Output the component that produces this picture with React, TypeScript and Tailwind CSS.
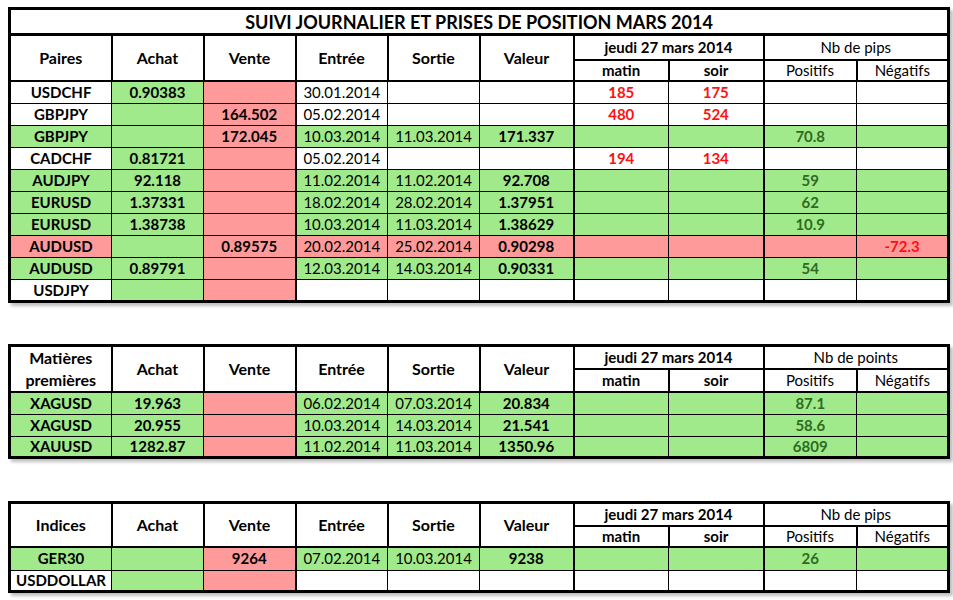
import React from "react";

type Fill = "w" | "g" | "r";
type Cell = { v?: string; f: Fill; tone?: "red" | "green" | "plain"; bold?: boolean };

const fillClass: Record<Fill, string> = {
  w: "bg-white",
  g: "bg-[#a0ea8c]",
  r: "bg-[#ff9a9a]",
};

// widths of the ten columns, left to right
const COLS = [102, 92, 92, 92, 92, 94, 95, 95, 93, 92];

// Column index after which a heavier vertical rule is drawn in data rows
const HEAVY = new Set([2, 5, 7]);

function row(
  pair: string,
  pairFill: Fill,
  achat: [string, Fill],
  vente: [string, Fill],
  rest: Fill,
  entree = "",
  sortie = "",
  valeur = "",
  matin = "",
  soir = "",
  pos = "",
  neg = ""
): Cell[] {
  return [
    { v: pair, f: pairFill, bold: true },
    { v: achat[0], f: achat[1], bold: true },
    { v: vente[0], f: vente[1], bold: true },
    { v: entree, f: rest },
    { v: sortie, f: rest },
    { v: valeur, f: rest, bold: true },
    { v: matin, f: rest, bold: true, tone: "red" },
    { v: soir, f: rest, bold: true, tone: "red" },
    { v: pos, f: rest, bold: true, tone: "green" },
    { v: neg, f: rest, bold: true, tone: "red" },
  ];
}

const pairs: Cell[][] = [
  row("USDCHF", "w", ["0.90383", "g"], ["", "r"], "w", "30.01.2014", "", "", "185", "175"),
  row("GBPJPY", "w", ["", "g"], ["164.502", "r"], "w", "05.02.2014", "", "", "480", "524"),
  row("GBPJPY", "g", ["", "g"], ["172.045", "r"], "g", "10.03.2014", "11.03.2014", "171.337", "", "", "70.8"),
  row("CADCHF", "w", ["0.81721", "g"], ["", "r"], "w", "05.02.2014", "", "", "194", "134"),
  row("AUDJPY", "g", ["92.118", "g"], ["", "r"], "g", "11.02.2014", "11.02.2014", "92.708", "", "", "59"),
  row("EURUSD", "g", ["1.37331", "g"], ["", "r"], "g", "18.02.2014", "28.02.2014", "1.37951", "", "", "62"),
  row("EURUSD", "g", ["1.38738", "g"], ["", "r"], "g", "10.03.2014", "11.03.2014", "1.38629", "", "", "10.9"),
  row("AUDUSD", "r", ["", "g"], ["0.89575", "r"], "r", "20.02.2014", "25.02.2014", "0.90298", "", "", "", "-72.3"),
  row("AUDUSD", "g", ["0.89791", "g"], ["", "r"], "g", "12.03.2014", "14.03.2014", "0.90331", "", "", "54"),
  row("USDJPY", "w", ["", "g"], ["", "r"], "w"),
];

const commodities: Cell[][] = [
  row("XAGUSD", "g", ["19.963", "g"], ["", "r"], "g", "06.02.2014", "07.03.2014", "20.834", "", "", "87.1"),
  row("XAGUSD", "g", ["20.955", "g"], ["", "r"], "g", "10.03.2014", "14.03.2014", "21.541", "", "", "58.6"),
  row("XAUUSD", "g", ["1282.87", "g"], ["", "r"], "g", "11.02.2014", "11.03.2014", "1350.96", "", "", "6809"),
];

const indices: Cell[][] = [
  row("GER30", "g", ["", "g"], ["9264", "r"], "g", "07.02.2014", "10.03.2014", "9238", "", "", "26"),
  row("USDDOLLAR", "w", ["", "g"], ["", "r"], "w"),
];

function toneClass(c: Cell) {
  if (c.tone === "red") return "text-[#ff1010]";
  if (c.tone === "green") return "text-[#2f6b1f]";
  return "text-black";
}

function SheetTable({
  title,
  first,
  unit,
  rows,
  rowHeights,
  headTop,
  headBottom,
}: {
  title?: string;
  first: React.ReactNode;
  unit: string;
  rows: Cell[][];
  rowHeights: number[];
  headTop: string;
  headBottom: string;
}) {
  const head = "border-2 border-black bg-white text-center leading-none";
  const main = `${head} font-bold text-[16px]`;
  return (
    <table className="table-fixed border-collapse border-[3px] border-black w-[939px] shadow-[3px_3px_3px_rgba(0,0,0,0.25)]">
      <colgroup>
        {COLS.map((w, i) => (
          <col key={i} style={{ width: w }} />
        ))}
      </colgroup>
      <tbody>
        {title && (
          <tr>
            <td colSpan={10} className="h-[26px] border-b-[3px] border-black bg-white text-center text-[18px] font-bold leading-none">
              {title}
            </td>
          </tr>
        )}
        <tr>
          <td rowSpan={2} className={main}>{first}</td>
          <td rowSpan={2} className={main}>Achat</td>
          <td rowSpan={2} className={main}>Vente</td>
          <td rowSpan={2} className={main}>Entrée</td>
          <td rowSpan={2} className={main}>Sortie</td>
          <td rowSpan={2} className={main}>Valeur</td>
          <td colSpan={2} className={`${head} ${headTop} font-bold text-[15px]`}>jeudi 27 mars 2014</td>
          <td colSpan={2} className={`${head} ${headTop} font-normal text-[15px]`}>{unit}</td>
        </tr>
        <tr>
          <td className={`${head} ${headBottom} font-bold text-[15px]`}>matin</td>
          <td className={`${head} ${headBottom} font-bold text-[15px]`}>soir</td>
          <td className={`${head} ${headBottom} font-normal text-[15px]`}>Positifs</td>
          <td className={`${head} ${headBottom} font-normal text-[15px]`}>Négatifs</td>
        </tr>
        {rows.map((r, ri) => (
          <tr key={ri}>
            {r.map((c, ci) => (
              <td
                key={ci}
                style={{ height: rowHeights[ri] }}
                className={`${fillClass[c.f]} ${toneClass(c)} ${
                  HEAVY.has(ci) ? "border-r-2" : "border-r"
                } border-l border-y border-black p-0 text-center text-[15px] leading-none ${
                  c.bold ? "font-bold" : "font-normal"
                }`}
              >
                {c.v}
              </td>
            ))}
          </tr>
        ))}
      </tbody>
    </table>
  );
}

export default function App() {
  return (
    <div className="min-h-[600px] w-[953px] bg-white pl-[8px] pt-[7px] font-['Lato','Open_Sans',sans-serif] text-black">
      <SheetTable
        title="SUIVI JOURNALIER ET PRISES DE POSITION MARS 2014"
        first="Paires"
        unit="Nb de pips"
        rows={pairs}
        rowHeights={[23, 22, 22, 22, 22, 22, 22, 22, 22, 22]}
        headTop="h-[25px]"
        headBottom="h-[21px]"
      />
      <div className="h-[41px]" />
      <SheetTable
        first={
          <span className="block leading-[22px]">
            Matières
            <br />
            premières
          </span>
        }
        unit="Nb de points"
        rows={commodities}
        rowHeights={[22, 22, 21]}
        headTop="h-[23px]"
        headBottom="h-[22px]"
      />
      <div className="h-[42px]" />
      <SheetTable
        first="Indices"
        unit="Nb de pips"
        rows={indices}
        rowHeights={[23, 21]}
        headTop="h-[24px]"
        headBottom="h-[21px]"
      />
    </div>
  );
}
